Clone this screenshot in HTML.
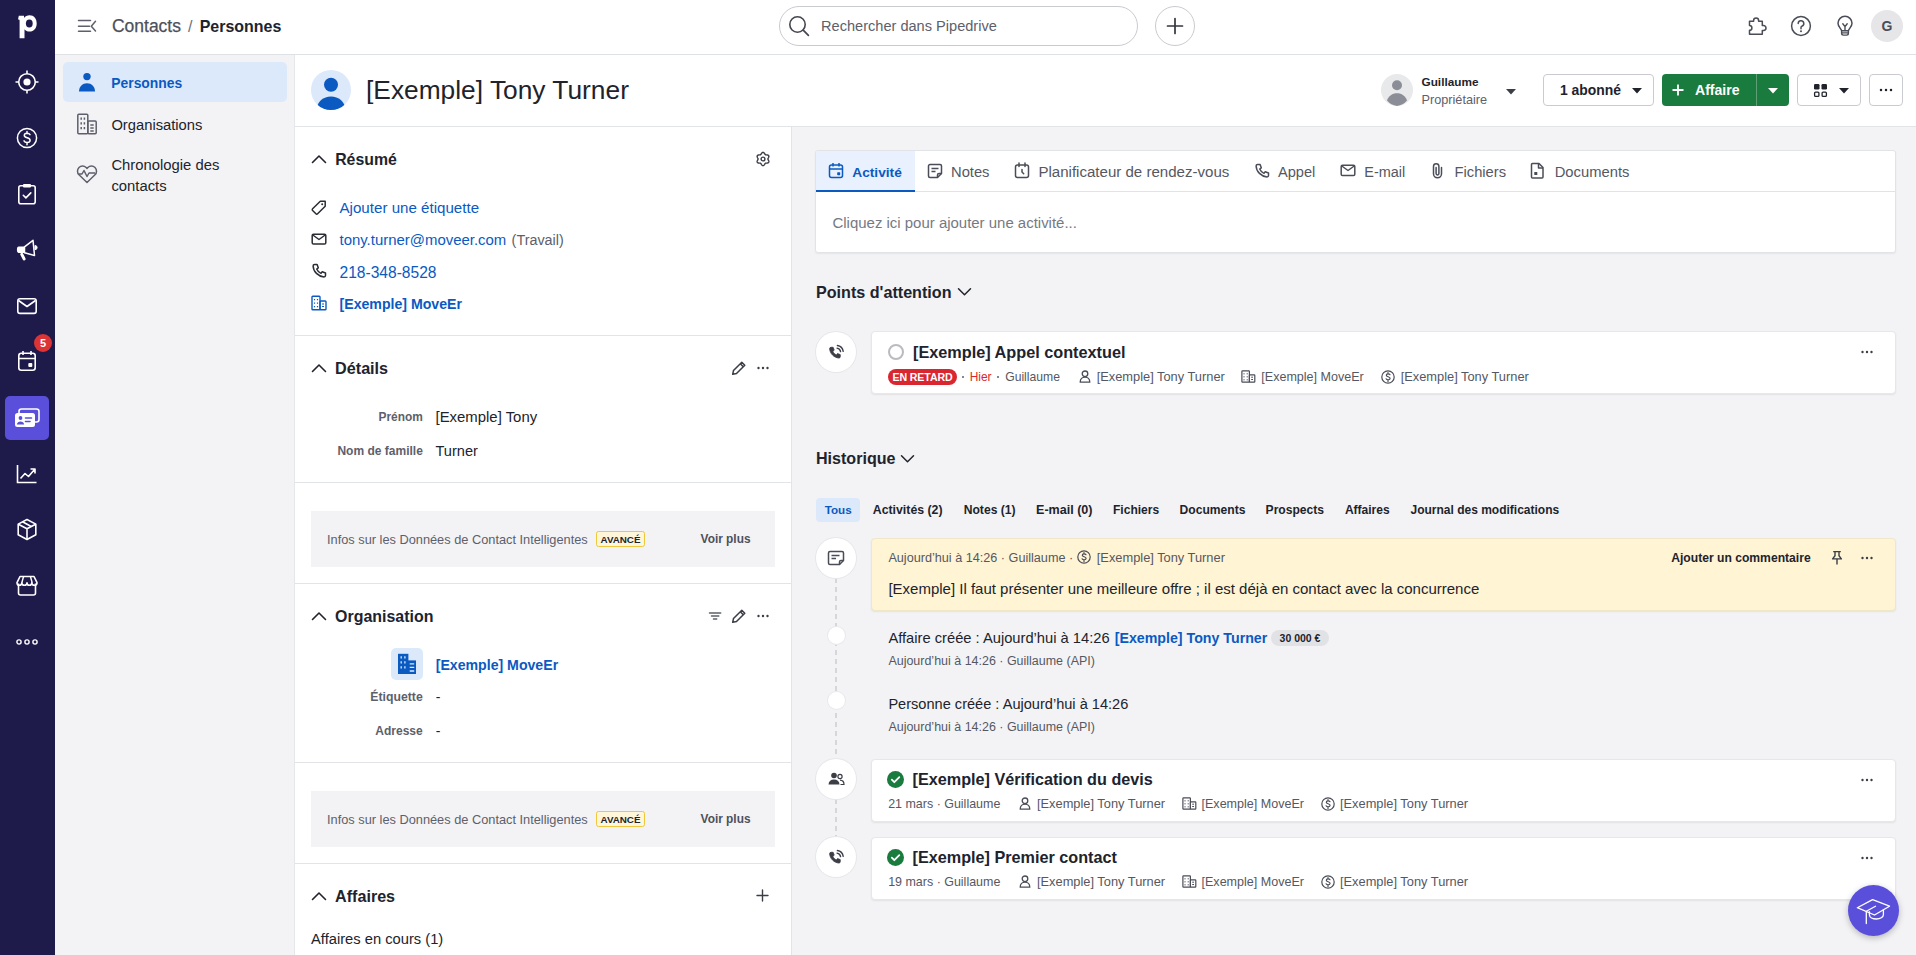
<!DOCTYPE html>
<html lang="fr"><head><meta charset="utf-8"><title>[Exemple] Tony Turner - Personnes</title><style>
*{margin:0;padding:0;box-sizing:border-box}
html,body{width:1916px;height:955px;overflow:hidden;background:#fff}
body{position:relative;font-family:"Liberation Sans",sans-serif;color:#21232c;-webkit-font-smoothing:antialiased}
.t{position:absolute;white-space:nowrap}
.r{position:absolute}
</style></head><body>
<div class="r" style="left:0px;top:0px;width:1916px;height:955px;background:#ffffff;"></div>
<div class="r" style="left:792px;top:127px;width:1124px;height:828px;background:#f3f3f5;"></div>
<div class="r" style="left:55px;top:55px;width:240px;height:900px;background:#f3f3f5;"></div>
<div class="r" style="left:294px;top:55px;width:1px;height:900px;background:#e6e7ea;"></div>
<div class="r" style="left:55px;top:54px;width:1861px;height:1px;background:#e0e1e4;"></div>
<div class="r" style="left:295px;top:126px;width:1621px;height:1px;background:#e3e4e7;"></div>
<div class="r" style="left:791px;top:127px;width:1px;height:828px;background:#e3e4e7;"></div>
<div class="r" style="left:0px;top:0px;width:55px;height:955px;background:#1e1b4b;"></div>
<svg class="r" style="left:17px;top:14px;" width="21" height="26" viewBox="0 0 21 26" fill="none"><path d="M1.8 1.8h5.2v2.2C8.2 2.4 10.2 1.3 12.6 1.3c4.3 0 7.1 3.4 7.1 8.1s-2.9 8.2-7.2 8.2c-2.1 0-3.9-.9-5-2.3v8.9H2.6V6.4c0-.6-.3-.9-.9-.9H1z" fill="#fff"/><ellipse cx="12.3" cy="9.5" rx="3.4" ry="4" fill="#1e1b4b"/></svg>
<svg class="r" style="left:15px;top:70px;" width="24" height="24" viewBox="0 0 24 24" fill="none"><circle cx="12" cy="12" r="8.3" stroke="#fff" stroke-width="1.6"/><circle cx="12" cy="12" r="3.6" fill="#fff"/><path d="M12 0.5v3M12 20.5v3M0.5 12h3M20.5 12h3" stroke="#fff" stroke-width="1.6"/></svg>
<svg class="r" style="left:16px;top:127px;" width="22" height="22" viewBox="0 0 22 22" fill="none"><circle cx="11" cy="11" r="9.6" stroke="#fff" stroke-width="1.5"/><path d="M14 7.6c-.5-.9-1.6-1.4-2.9-1.4-1.7 0-2.8.9-2.8 2.2 0 2.9 5.8 1.7 5.8 4.8 0 1.3-1.2 2.3-3 2.3-1.4 0-2.6-.6-3.1-1.6M11 4.5v2M11 15.7v2" stroke="#fff" stroke-width="1.5" stroke-linecap="round"/></svg>
<svg class="r" style="left:17px;top:183px;" width="20" height="22" viewBox="0 0 20 22" fill="none"><rect x="1.8" y="2.8" width="16.4" height="18" rx="2" stroke="#fff" stroke-width="1.6"/><rect x="6" y="1" width="8" height="3.5" rx="1" fill="#fff"/><path d="M6.3 12.3l2.6 2.6 4.9-5" stroke="#fff" stroke-width="1.6" stroke-linecap="round" stroke-linejoin="round"/></svg>
<svg class="r" style="left:12px;top:235px;" width="30" height="30" viewBox="0 0 30 30" fill="none"><path d="M6.8 11.6h5.7v6.3H6.8a1.9 3.15 0 0 1 0-6.3z" fill="#fff"/><path d="M12.5 11.8L21 5.3l1.5 15.2-10-2.8z" stroke="#fff" stroke-width="1.5" stroke-linejoin="round"/><path d="M23 10.5a2 2 0 0 1 0 4.2z" fill="#fff" stroke="#fff" stroke-width="1"/><path d="M9.8 19.3l2.3 4.6" stroke="#fff" stroke-width="3" stroke-linecap="round"/></svg>
<svg class="r" style="left:16px;top:296px;" width="22" height="20" viewBox="0 0 22 20" fill="none"><rect x="1.8" y="2.8" width="18.4" height="14.6" rx="2.2" stroke="#fff" stroke-width="1.6"/><path d="M2.5 4.5l8.5 6 8.5-6" stroke="#fff" stroke-width="1.6" stroke-linejoin="round"/></svg>
<svg class="r" style="left:17px;top:350px;" width="20" height="22" viewBox="0 0 20 22" fill="none"><rect x="1.8" y="3.3" width="16.4" height="17" rx="2.5" stroke="#fff" stroke-width="1.6"/><path d="M1.8 8.5h16.4M6 1v4M14 1v4" stroke="#fff" stroke-width="1.6"/><rect x="11.3" y="13" width="4" height="4" rx="1" fill="#fff"/></svg>
<div class="r" style="left:34px;top:334px;width:18px;height:18px;border-radius:50%;background:#dc3434;box-shadow:0 0 0 1.5px #1e1b4b;color:#fff;font-weight:700;font-size:11px;line-height:18px;text-align:center">5</div>
<div class="r" style="left:5px;top:396px;width:44px;height:44px;background:#5a4fdb;border-radius:5px;"></div>
<svg class="r" style="left:14px;top:408px;" width="26" height="20" viewBox="0 0 26 20" fill="none"><rect x="5" y="1" width="20" height="13" rx="2.5" stroke="#fff" stroke-width="1.6" fill="none"/><rect x="1" y="5" width="20" height="14" rx="2.5" fill="#fff"/><circle cx="6.5" cy="10" r="1.9" fill="#5a4fdb"/><path d="M2.8 16.5c.3-2 1.8-3.1 3.7-3.1s3.4 1.1 3.7 3.1z" fill="#5a4fdb"/><path d="M11.5 10h6M11.5 13.5h4.5" stroke="#5a4fdb" stroke-width="1.6" stroke-linecap="round"/></svg>
<svg class="r" style="left:16px;top:464px;" width="22" height="20" viewBox="0 0 22 20" fill="none"><path d="M1.5 1v17.5h19" stroke="#fff" stroke-width="1.6"/><path d="M4.5 14.5l4.5-5 3.5 3 6-7M14.5 5h4.5v4.5" stroke="#fff" stroke-width="1.6" stroke-linejoin="round"/></svg>
<svg class="r" style="left:16px;top:518px;" width="22" height="23" viewBox="0 0 22 23" fill="none"><path d="M11 1.5l8.8 4.6v10.6L11 21.5 2.2 16.7V6.1z" stroke="#fff" stroke-width="1.6" stroke-linejoin="round"/><path d="M2.4 6.2L11 10.8l8.6-4.6M11 10.8v10.5M6.5 3.8l8.7 4.7" stroke="#fff" stroke-width="1.6" stroke-linejoin="round"/></svg>
<svg class="r" style="left:16px;top:575px;" width="22" height="21" viewBox="0 0 22 21" fill="none"><path d="M2.5 8.5v9.5a2 2 0 0 0 2 2h13a2 2 0 0 0 2-2V8.5" stroke="#fff" stroke-width="1.6"/><path d="M4 1.5h14l3 6.2c0 1.6-1.3 2.6-2.6 2.6-1.4 0-2.6-1-2.6-2.6 0 1.6-1.3 2.6-2.6 2.6S11 9.3 11 7.7c0 1.6-1.3 2.6-2.6 2.6S5.8 9.3 5.8 7.7c0 1.6-1.3 2.6-2.6 2.6S.9 9.3 1 7.7z" stroke="#fff" stroke-width="1.6" stroke-linejoin="round"/><path d="M7.5 1.8l-1.7 6M14.5 1.8l1.7 6" stroke="#fff" stroke-width="1.4"/></svg>
<svg class="r" style="left:16px;top:637px;" width="22" height="10" viewBox="0 0 22 10" fill="none"><circle cx="3" cy="5" r="2.1" stroke="#fff" stroke-width="1.4"/><circle cx="11" cy="5" r="2.1" stroke="#fff" stroke-width="1.4"/><circle cx="19" cy="5" r="2.1" stroke="#fff" stroke-width="1.4"/></svg>
<svg class="r" style="left:77px;top:18px;" width="20" height="16" viewBox="0 0 20 16" fill="none"><path d="M1.5 2.5h12M1.5 8.2h11M1.5 13.2h12" stroke="#5d606b" stroke-width="1.5" stroke-linecap="round"/><path d="M18.5 3.3l-4.2 4.9 4.2 4.8" stroke="#5d606b" stroke-width="1.5" stroke-linecap="round" stroke-linejoin="round"/></svg>
<div class="t" style="top:18.00px;font-size:17.48px;line-height:17.48px;color:#4d505a;left:112px;-webkit-text-stroke:.25px #4d505a;">Contacts</div>
<div class="t" style="top:19.00px;font-size:16px;line-height:16px;color:#6d707a;left:188px;">/</div>
<div class="t" style="top:19.00px;font-size:15.96px;line-height:15.96px;font-weight:700;color:#21232c;left:199.7px;">Personnes</div>
<div class="r" style="left:779px;top:6px;width:359px;height:40px;background:#fff;border:1px solid #c9cbd0;border-radius:20px;box-sizing:border-box;"></div>
<svg class="r" style="left:787px;top:14px;" width="24" height="24" viewBox="0 0 24 24" fill="none"><circle cx="10.5" cy="10.5" r="7.7" stroke="#44474f" stroke-width="1.6"/><path d="M16.2 16.2l5.2 5.2" stroke="#44474f" stroke-width="1.7" stroke-linecap="round"/></svg>
<div class="t" style="top:19.00px;font-size:14.59px;line-height:14.59px;color:#5d606b;left:821px;">Rechercher dans Pipedrive</div>
<div class="r" style="left:1155px;top:6px;width:40px;height:40px;background:#fff;border:1px solid #c9cbd0;border-radius:50%;box-sizing:border-box;"></div>
<svg class="r" style="left:1166px;top:17px;" width="18" height="18" viewBox="0 0 18 18" fill="none"><path d="M9 1.5v15M1.5 9h15" stroke="#33363e" stroke-width="1.7" stroke-linecap="round"/></svg>
<svg class="r" style="left:1740px;top:10px;" width="30" height="30" viewBox="0 0 30 30" fill="none"><path d="M9.5 24.2V20.3a2.4 2.4 0 0 0 0-4.8V11.3h4.1v-.8a2.5 2.5 0 0 1 5 0v.8h3.7v4.3h1.3a2.4 2.4 0 0 1 0 4.8h-1.3v3.8z" stroke="#4a4d57" stroke-width="1.5" stroke-linejoin="round"/></svg>
<svg class="r" style="left:1790px;top:15px;" width="22" height="22" viewBox="0 0 22 22" fill="none"><circle cx="11" cy="11" r="9.4" stroke="#4a4d57" stroke-width="1.5"/><path d="M8.2 8.5a2.8 2.8 0 1 1 3.7 2.7c-.6.3-.9.8-.9 1.5v1" stroke="#4a4d57" stroke-width="1.5" stroke-linecap="round"/><circle cx="11" cy="16.3" r="1" fill="#4a4d57"/></svg>
<svg class="r" style="left:1834px;top:15px;" width="22" height="22" viewBox="0 0 22 22" fill="none"><path d="M7.6 15.7C7.3 13.8 4 12 4 8.3a7 7 0 0 1 14 0c0 3.7-3.3 5.5-3.6 7.4z" stroke="#4a4d57" stroke-width="1.5" stroke-linejoin="round"/><path d="M7.6 15.7v2.6c0 1 .8 1.8 1.8 1.8h3.2c1 0 1.8-.8 1.8-1.8v-2.6M7.8 17.9h6.4" stroke="#4a4d57" stroke-width="1.4" stroke-linejoin="round"/><path d="M8.8 8.8L11 11.6l2.2-2.8M11 11.6v4" stroke="#4a4d57" stroke-width="1.4" stroke-linecap="round" stroke-linejoin="round"/></svg>
<div class="r" style="left:1871px;top:10px;width:32px;height:32px;border-radius:50%;background:#e6e6e8;color:#4a4d57;font-weight:700;font-size:14px;line-height:32px;text-align:center">G</div>
<div class="r" style="left:63px;top:62px;width:224px;height:40px;background:#dce9fb;border-radius:5px;"></div>
<svg class="r" style="left:77px;top:72px;" width="20" height="20" viewBox="0 0 20 20" fill="none"><circle cx="10" cy="4.6" r="3.7" fill="#0a5ac2"/><path d="M2 19.5c0-5 3.6-8.2 8-8.2s8 3.2 8 8.2z" fill="#0a5ac2"/></svg>
<div class="t" style="top:77.00px;font-size:13.87px;line-height:13.87px;font-weight:700;color:#0a5ac2;left:111.3px;">Personnes</div>
<svg class="r" style="left:76px;top:113px;" width="22" height="22" viewBox="0 0 22 22" fill="none"><rect x="1.8" y="1.2" width="10" height="19.6" rx="1" stroke="#5d606b" stroke-width="1.5"/><rect x="11.8" y="8" width="8.4" height="12.8" rx="1" stroke="#5d606b" stroke-width="1.5"/><path d="M5.2 4.6v2.2M8.4 4.6v2.2M5.2 9.3v2.2M8.4 9.3v2.2M5.2 14v2.2M8.4 14v2.2M14.3 12h3.4M14.3 15h3.4M14.3 18h3.4" stroke="#5d606b" stroke-width="1.5"/></svg>
<div class="t" style="top:118.00px;font-size:14.75px;line-height:14.75px;color:#21232c;left:111.4px;">Organisations</div>
<svg class="r" style="left:76px;top:163px;" width="22" height="22" viewBox="0 0 22 22" fill="none"><path d="M11 19.5L3 11.8C1 9.8 1 6.5 3 4.5s5.1-2 7.1 0l.9.9.9-.9c2-2 5.1-2 7.1 0s2 5.3 0 7.3z" stroke="#5d606b" stroke-width="1.5" stroke-linejoin="round"/><path d="M2.5 11l3.5 0 2-3.5 3 6 2-3.5h6" stroke="#5d606b" stroke-width="1.5" stroke-linejoin="round"/></svg>
<div class="t" style="top:158.00px;font-size:14.83px;line-height:14.83px;color:#21232c;left:111.4px;">Chronologie des</div>
<div class="t" style="top:179.00px;font-size:14.83px;line-height:14.83px;color:#21232c;left:111.4px;">contacts</div>
<svg class="r" style="left:311px;top:70px;" width="40" height="40" viewBox="0 0 40 40" fill="none"><defs><clipPath id="av"><circle cx="20" cy="20" r="20"/></clipPath></defs><circle cx="20" cy="20" r="20" fill="#dce9fb"/><g clip-path="url(#av)"><circle cx="20" cy="14.8" r="7" fill="#0a5ac2"/><ellipse cx="20" cy="39" rx="14" ry="12.6" fill="#0a5ac2"/></g></svg>
<div class="t" style="top:77.00px;font-size:26.34px;line-height:26.34px;color:#21232c;left:366px;">[Exemple] Tony Turner</div>
<svg class="r" style="left:1381px;top:74px;" width="32" height="32" viewBox="0 0 32 32" fill="none"><circle cx="16" cy="16" r="16" fill="#e8e9eb"/><circle cx="16" cy="11.3" r="5" fill="#8b8e96"/><path d="M6 26.5c1.5-4.6 5.4-7.2 10-7.2s8.5 2.6 10 7.2A15.9 15.9 0 0 1 16 32a15.9 15.9 0 0 1-10-5.5z" fill="#8b8e96"/></svg>
<div class="t" style="top:76.00px;font-size:11.79px;line-height:11.79px;font-weight:700;color:#21232c;left:1421.5px;">Guillaume</div>
<div class="t" style="top:94.00px;font-size:12.69px;line-height:12.69px;color:#5d606b;left:1421.5px;">Propriétaire</div>
<svg class="r" style="left:1506px;top:89px;" width="10" height="6" viewBox="0 0 10 6" fill="none"><path d="M0 0h10L5 5.5z" fill="#3b3e47"/></svg>
<div class="r" style="left:1543px;top:74px;width:111px;height:32px;background:#fff;border:1px solid #c9cbd0;border-radius:4px;"></div>
<div class="t" style="top:84.00px;font-size:13.9px;line-height:13.9px;font-weight:700;color:#21232c;left:1560px;">1 abonné</div>
<svg class="r" style="left:1632px;top:88px;" width="10" height="6" viewBox="0 0 10 6" fill="none"><path d="M0 0h10L5 5.5z" fill="#21232c"/></svg>
<div class="r" style="left:1662px;top:74px;width:127px;height:32px;background:#1a7b3e;border-radius:4px;"></div>
<div class="r" style="left:1756px;top:74px;width:1px;height:32px;background:#5e9f76;"></div>
<svg class="r" style="left:1672px;top:84px;" width="12" height="12" viewBox="0 0 12 12" fill="none"><path d="M6 .5v11M.5 6h11" stroke="#fff" stroke-width="1.8"/></svg>
<div class="t" style="top:83.00px;font-size:14.08px;line-height:14.08px;font-weight:700;color:#fff;left:1695px;">Affaire</div>
<svg class="r" style="left:1768px;top:88px;" width="10" height="6" viewBox="0 0 10 6" fill="none"><path d="M0 0h10L5 5.5z" fill="#fff"/></svg>
<div class="r" style="left:1797px;top:74px;width:64px;height:32px;background:#fff;border:1px solid #c9cbd0;border-radius:4px;"></div>
<svg class="r" style="left:1813px;top:83px;" width="15" height="15" viewBox="0 0 15 15" fill="none"><rect x="1" y="1" width="5.5" height="5.5" rx="1.2" fill="#21232c"/><rect x="8.5" y="1" width="5.5" height="5.5" rx="1.2" fill="#21232c"/><rect x="1.6" y="9.1" width="4.3" height="4.3" rx="1" stroke="#21232c" stroke-width="1.3"/><rect x="9.1" y="9.1" width="4.3" height="4.3" rx="1" stroke="#21232c" stroke-width="1.3"/></svg>
<svg class="r" style="left:1839px;top:88px;" width="10" height="6" viewBox="0 0 10 6" fill="none"><path d="M0 0h10L5 5.5z" fill="#21232c"/></svg>
<div class="r" style="left:1869px;top:74px;width:34px;height:32px;background:#fff;border:1px solid #c9cbd0;border-radius:4px;"></div>
<svg class="r" style="left:1879px;top:88px;" width="14" height="4" viewBox="0 0 14 4" fill="none"><circle cx="2" cy="2" r="1.25" fill="#21232c"/><circle cx="7" cy="2" r="1.25" fill="#21232c"/><circle cx="12" cy="2" r="1.25" fill="#21232c"/></svg>
<svg class="r" style="left:311px;top:154px;" width="16" height="10" viewBox="0 0 16 10" fill="none"><path d="M1.5 8.5L8 2l6.5 6.5" stroke="#21232c" stroke-width="1.6" stroke-linecap="round" stroke-linejoin="round"/></svg>
<div class="t" style="top:152.00px;font-size:15.83px;line-height:15.83px;font-weight:700;color:#21232c;left:335.2px;">Résumé</div>
<svg class="r" style="left:754px;top:150px;" width="18" height="18" viewBox="0 0 18 18" fill="none"><path d="M13.90 9.00L13.95 9.32L14.10 9.67L14.32 10.06L14.55 10.49L14.75 10.95L14.87 11.43L14.86 11.89L14.72 12.30L14.43 12.63L14.04 12.87L13.57 13.01L13.07 13.07L12.58 13.08L12.13 13.08L11.76 13.13L11.45 13.24L11.20 13.45L10.97 13.76L10.74 14.14L10.49 14.55L10.19 14.96L9.83 15.30L9.43 15.52L9.00 15.60L8.57 15.52L8.17 15.30L7.81 14.96L7.51 14.55L7.26 14.14L7.03 13.76L6.80 13.45L6.55 13.24L6.24 13.13L5.87 13.08L5.42 13.08L4.93 13.07L4.43 13.01L3.96 12.87L3.57 12.63L3.28 12.30L3.14 11.89L3.13 11.43L3.25 10.95L3.45 10.49L3.68 10.06L3.90 9.67L4.05 9.32L4.10 9.00L4.05 8.68L3.90 8.33L3.68 7.94L3.45 7.51L3.25 7.05L3.13 6.57L3.14 6.11L3.28 5.70L3.57 5.37L3.96 5.13L4.43 4.99L4.93 4.93L5.42 4.92L5.87 4.92L6.24 4.87L6.55 4.76L6.80 4.55L7.03 4.24L7.26 3.86L7.51 3.45L7.81 3.04L8.17 2.70L8.57 2.48L9.00 2.40L9.43 2.48L9.83 2.70L10.19 3.04L10.49 3.45L10.74 3.86L10.97 4.24L11.20 4.55L11.45 4.76L11.76 4.87L12.13 4.92L12.58 4.92L13.07 4.93L13.57 4.99L14.04 5.13L14.43 5.37L14.72 5.70L14.86 6.11L14.87 6.57L14.75 7.05L14.55 7.51L14.32 7.94L14.10 8.33L13.95 8.68z" stroke="#3b3e47" stroke-width="1.4" stroke-linejoin="round"/><circle cx="9" cy="9" r="1.9" stroke="#3b3e47" stroke-width="1.4"/></svg>
<svg class="r" style="left:311px;top:200px;" width="16" height="15" viewBox="0 0 16 15" fill="none"><path d="M9.3 1.3h4.9v4.9l-7.6 7.6a1.2 1.2 0 0 1-1.7 0L1.6 10.5a1.2 1.2 0 0 1 0-1.7z" stroke="#2b2d35" stroke-width="1.5" stroke-linejoin="round"/><circle cx="11.2" cy="4.3" r="1" fill="#2b2d35"/></svg>
<div class="t" style="top:200.00px;font-size:15.14px;line-height:15.14px;color:#0a5ac2;left:339.5px;">Ajouter une étiquette</div>
<svg class="r" style="left:311px;top:233px;" width="16" height="12" viewBox="0 0 16 12" fill="none"><rect x="1.2" y="1.2" width="13.6" height="9.8" rx="1.3" stroke="#2b2d35" stroke-width="1.5"/><path d="M1.8 2l6.2 4.5L14.2 2" stroke="#2b2d35" stroke-width="1.5" stroke-linejoin="round"/></svg>
<div class="t" style="top:233.00px;font-size:14.95px;line-height:14.95px;color:#0a5ac2;left:339.5px;">tony.turner@moveer.com</div>
<div class="t" style="top:233.00px;font-size:14.38px;line-height:14.38px;color:#5d606b;left:511.6px;">(Travail)</div>
<svg class="r" style="left:311px;top:263px;" width="16" height="16" viewBox="0 0 16 16" fill="none"><path d="M3.6 1.5l2.5 0 1.2 3.3-1.6 1.2c.8 1.9 2.3 3.5 4.3 4.4l1.2-1.6 3.3 1.2v2.5c0 .8-.7 1.4-1.5 1.4C7.2 13.5 2.3 8.6 2.1 3c0-.8.7-1.5 1.5-1.5z" stroke="#2b2d35" stroke-width="1.5" stroke-linejoin="round"/></svg>
<div class="t" style="top:265.00px;font-size:15.58px;line-height:15.58px;color:#0a5ac2;left:339.5px;">218-348-8528</div>
<svg class="r" style="left:311px;top:295px;" width="16" height="16" viewBox="0 0 16 16" fill="none"><rect x="1" y="1.2" width="8" height="13.6" rx=".8" stroke="#0a5ac2" stroke-width="1.4"/><rect x="9" y="6" width="6" height="8.8" rx=".8" stroke="#0a5ac2" stroke-width="1.4"/><path d="M3.5 4v1.3M6.5 4v1.3M3.5 7.5v1.3M6.5 7.5v1.3M3.5 11v1.3M6.5 11v1.3M11 9h2M11 11.5h2" stroke="#0a5ac2" stroke-width="1.2"/></svg>
<div class="t" style="top:297.00px;font-size:14.13px;line-height:14.13px;font-weight:700;color:#0a5ac2;left:339.5px;">[Exemple] MoveEr</div>
<div class="r" style="left:295px;top:335px;width:496px;height:1px;background:#e3e4e7;"></div>
<svg class="r" style="left:311px;top:363px;" width="16" height="10" viewBox="0 0 16 10" fill="none"><path d="M1.5 8.5L8 2l6.5 6.5" stroke="#21232c" stroke-width="1.6" stroke-linecap="round" stroke-linejoin="round"/></svg>
<div class="t" style="top:360.00px;font-size:16.16px;line-height:16.16px;font-weight:700;color:#21232c;left:335.1px;">Détails</div>
<svg class="r" style="left:731px;top:360px;" width="16" height="16" viewBox="0 0 16 16" fill="none"><path d="M10.8 2.2l3 3L5.5 13.5l-3.8.8.8-3.8z" stroke="#3b3e47" stroke-width="1.5" stroke-linejoin="round"/><path d="M9.3 3.7l3 3" stroke="#3b3e47" stroke-width="1.5"/></svg>
<svg class="r" style="left:756px;top:366px;" width="14" height="4" viewBox="0 0 14 4" fill="none"><circle cx="2.5" cy="2" r="1.2" fill="#3b3e47"/><circle cx="7" cy="2" r="1.2" fill="#3b3e47"/><circle cx="11.5" cy="2" r="1.2" fill="#3b3e47"/></svg>
<div class="t" style="top:412.00px;font-size:11.92px;line-height:11.92px;font-weight:700;color:#5d606b;right:1493.2px;">Prénom</div>
<div class="t" style="top:410.00px;font-size:14.92px;line-height:14.92px;color:#21232c;left:435.5px;">[Exemple] Tony</div>
<div class="t" style="top:445.00px;font-size:12.01px;line-height:12.01px;font-weight:700;color:#5d606b;right:1493.2px;">Nom de famille</div>
<div class="t" style="top:444.00px;font-size:14.58px;line-height:14.58px;color:#21232c;left:435.5px;">Turner</div>
<div class="r" style="left:295px;top:482px;width:496px;height:1px;background:#e3e4e7;"></div>
<div class="r" style="left:311px;top:511px;width:464px;height:56px;background:#f3f3f5;"></div>
<div class="t" style="top:534.00px;font-size:12.79px;line-height:12.79px;color:#5d606b;left:327px;">Infos sur les Données de Contact Intelligentes</div>
<div class="r" style="left:596px;top:531px;width:49px;height:16px;background:#fff6da;border:1px solid #efc73a;border-radius:2.5px;color:#21232c;font-weight:700;font-size:9.8px;line-height:15px;text-align:center">AVANCÉ</div>
<div class="t" style="top:534.00px;font-size:11.89px;line-height:11.89px;font-weight:700;color:#4d505a;left:700.6px;">Voir plus</div>
<div class="r" style="left:295px;top:583px;width:496px;height:1px;background:#e3e4e7;"></div>
<svg class="r" style="left:311px;top:611px;" width="16" height="10" viewBox="0 0 16 10" fill="none"><path d="M1.5 8.5L8 2l6.5 6.5" stroke="#21232c" stroke-width="1.6" stroke-linecap="round" stroke-linejoin="round"/></svg>
<div class="t" style="top:609.00px;font-size:15.94px;line-height:15.94px;font-weight:700;color:#21232c;left:335.1px;">Organisation</div>
<svg class="r" style="left:707px;top:609px;" width="16" height="14" viewBox="0 0 16 14" fill="none"><path d="M2.5 3.9h11.2M4.5 6.9h7.3M6.5 10h3.2" stroke="#5d606b" stroke-width="1.5" stroke-linecap="round"/></svg>
<svg class="r" style="left:731px;top:608px;" width="16" height="16" viewBox="0 0 16 16" fill="none"><path d="M10.8 2.2l3 3L5.5 13.5l-3.8.8.8-3.8z" stroke="#3b3e47" stroke-width="1.5" stroke-linejoin="round"/><path d="M9.3 3.7l3 3" stroke="#3b3e47" stroke-width="1.5"/></svg>
<svg class="r" style="left:756px;top:614px;" width="14" height="4" viewBox="0 0 14 4" fill="none"><circle cx="2.5" cy="2" r="1.2" fill="#3b3e47"/><circle cx="7" cy="2" r="1.2" fill="#3b3e47"/><circle cx="11.5" cy="2" r="1.2" fill="#3b3e47"/></svg>
<div class="r" style="left:391px;top:648px;width:32px;height:32px;background:#dce9fb;border-radius:5px;"></div>
<svg class="r" style="left:391px;top:648px;" width="32" height="32" viewBox="0 0 32 32" fill="none"><rect x="7" y="5.8" width="10.4" height="20.2" fill="#0a5ac2"/><rect x="17" y="12.4" width="8" height="13.6" fill="#0a5ac2"/><path d="M10.2 8.2v2.4M13.9 8.2v2.4M10.2 13.2v2.4M13.9 13.2v2.4M10.2 18.2v2.4M13.9 18.2v2.4" stroke="#dce9fb" stroke-width="1.3"/><path d="M18.7 15.8h4.5M18.7 19.4h4.5M18.7 23h4.5" stroke="#dce9fb" stroke-width="1.3"/></svg>
<div class="t" style="top:658.00px;font-size:14.13px;line-height:14.13px;font-weight:700;color:#0a5ac2;left:435.7px;">[Exemple] MoveEr</div>
<div class="t" style="top:691.00px;font-size:12.25px;line-height:12.25px;font-weight:700;color:#5d606b;right:1493.3px;">Étiquette</div>
<div class="t" style="top:690.00px;font-size:14px;line-height:14px;color:#21232c;left:435.7px;">-</div>
<div class="t" style="top:725.00px;font-size:12.01px;line-height:12.01px;font-weight:700;color:#5d606b;right:1493.3px;">Adresse</div>
<div class="t" style="top:724.00px;font-size:14px;line-height:14px;color:#21232c;left:435.7px;">-</div>
<div class="r" style="left:295px;top:762px;width:496px;height:1px;background:#e3e4e7;"></div>
<div class="r" style="left:311px;top:791px;width:464px;height:56px;background:#f3f3f5;"></div>
<div class="t" style="top:814.00px;font-size:12.79px;line-height:12.79px;color:#5d606b;left:327px;">Infos sur les Données de Contact Intelligentes</div>
<div class="r" style="left:596px;top:811px;width:49px;height:16px;background:#fff6da;border:1px solid #efc73a;border-radius:2.5px;color:#21232c;font-weight:700;font-size:9.8px;line-height:15px;text-align:center">AVANCÉ</div>
<div class="t" style="top:814.00px;font-size:11.89px;line-height:11.89px;font-weight:700;color:#4d505a;left:700.6px;">Voir plus</div>
<div class="r" style="left:295px;top:863px;width:496px;height:1px;background:#e3e4e7;"></div>
<svg class="r" style="left:311px;top:891px;" width="16" height="10" viewBox="0 0 16 10" fill="none"><path d="M1.5 8.5L8 2l6.5 6.5" stroke="#21232c" stroke-width="1.6" stroke-linecap="round" stroke-linejoin="round"/></svg>
<div class="t" style="top:888.00px;font-size:16.11px;line-height:16.11px;font-weight:700;color:#21232c;left:335.1px;">Affaires</div>
<svg class="r" style="left:756px;top:889px;" width="13" height="13" viewBox="0 0 13 13" fill="none"><path d="M6.5 1v11M1 6.5h11" stroke="#3b3e47" stroke-width="1.4" stroke-linecap="round"/></svg>
<div class="t" style="top:932.00px;font-size:14.72px;line-height:14.72px;color:#21232c;left:311px;">Affaires en cours (1)</div>
<div class="r" style="left:815px;top:150px;width:1081px;height:103px;background:#fff;border:1px solid #e2e3e6;border-radius:3px;box-shadow:0 1px 2px rgba(0,0,0,.06);"></div>
<div class="r" style="left:816px;top:151px;width:99px;height:39px;background:#e8f1fd;border-top-left-radius:2px;"></div>
<div class="r" style="left:816px;top:191px;width:1079px;height:1px;background:#e2e3e6;"></div>
<div class="r" style="left:816px;top:190px;width:99px;height:2px;background:#0a5ac2;"></div>
<svg class="r" style="left:828px;top:162px;" width="16" height="17" viewBox="0 0 16 17" fill="none"><rect x="1.5" y="3" width="13" height="12.5" rx="2" stroke="#0a5ac2" stroke-width="1.5"/><path d="M1.5 7h13M5 1v3.5M11 1v3.5" stroke="#0a5ac2" stroke-width="1.5"/><rect x="9.2" y="10.2" width="3" height="3" rx=".6" fill="#0a5ac2"/></svg>
<div class="t" style="top:166.00px;font-size:13.7px;line-height:13.7px;font-weight:700;color:#0a5ac2;left:852.3px;">Activité</div>
<svg class="r" style="left:927px;top:163px;" width="16" height="16" viewBox="0 0 16 16" fill="none"><path d="M3 1.5h10a1.5 1.5 0 0 1 1.5 1.5v7.5l-4 4H3A1.5 1.5 0 0 1 1.5 13V3A1.5 1.5 0 0 1 3 1.5z" stroke="#4a4d57" stroke-width="1.5" stroke-linejoin="round"/><path d="M4.5 5.5h7M4.5 8.5h4M14.5 10.5h-2.5a1.5 1.5 0 0 0-1.5 1.5v2.5" stroke="#4a4d57" stroke-width="1.5" stroke-linejoin="round"/></svg>
<div class="t" style="top:165.00px;font-size:14.74px;line-height:14.74px;color:#555862;left:951px;">Notes</div>
<svg class="r" style="left:1014px;top:162px;" width="16" height="17" viewBox="0 0 16 17" fill="none"><rect x="1.5" y="3" width="13" height="12.5" rx="2" stroke="#4a4d57" stroke-width="1.5"/><path d="M5 1v3.5M11 1v3.5M8 7.5v2.5l1.7 1.7" stroke="#4a4d57" stroke-width="1.5" stroke-linecap="round"/></svg>
<div class="t" style="top:164.00px;font-size:15.07px;line-height:15.07px;color:#555862;left:1038.4px;">Planificateur de rendez-vous</div>
<svg class="r" style="left:1254px;top:163px;" width="16" height="16" viewBox="0 0 16 16" fill="none"><path d="M3.6 1.5l2.5 0 1.2 3.3-1.6 1.2c.8 1.9 2.3 3.5 4.3 4.4l1.2-1.6 3.3 1.2v2.5c0 .8-.7 1.4-1.5 1.4C7.2 13.5 2.3 8.6 2.1 3c0-.8.7-1.5 1.5-1.5z" stroke="#4a4d57" stroke-width="1.5" stroke-linejoin="round"/></svg>
<div class="t" style="top:165.00px;font-size:14.62px;line-height:14.62px;color:#555862;left:1278px;">Appel</div>
<svg class="r" style="left:1340px;top:164px;" width="16" height="13" viewBox="0 0 16 13" fill="none"><rect x="1.2" y="1.2" width="13.6" height="10.3" rx="1.3" stroke="#4a4d57" stroke-width="1.5"/><path d="M1.8 2l6.2 4.5L14.2 2" stroke="#4a4d57" stroke-width="1.5" stroke-linejoin="round"/></svg>
<div class="t" style="top:165.00px;font-size:14.47px;line-height:14.47px;color:#555862;left:1364.3px;">E-mail</div>
<svg class="r" style="left:1431px;top:162px;" width="13" height="17" viewBox="0 0 13 17" fill="none"><path d="M10.5 5.5v6.3a4 4 0 0 1-8 0V4.5a2.7 2.7 0 0 1 5.4 0v7a1.4 1.4 0 0 1-2.8 0V5.5" stroke="#4a4d57" stroke-width="1.5" stroke-linecap="round"/></svg>
<div class="t" style="top:165.00px;font-size:14.74px;line-height:14.74px;color:#555862;left:1454.5px;">Fichiers</div>
<svg class="r" style="left:1530px;top:162px;" width="15" height="17" viewBox="0 0 15 17" fill="none"><path d="M2.5 1.5h6.5l4 4v9.5a1 1 0 0 1-1 1h-9.5a1 1 0 0 1-1-1V2.5a1 1 0 0 1 1-1z" stroke="#4a4d57" stroke-width="1.5" stroke-linejoin="round"/><path d="M8.5 1.5v4.5h4.5" stroke="#4a4d57" stroke-width="1.5" stroke-linejoin="round"/><rect x="4.3" y="10" width="3" height="3" fill="#4a4d57"/></svg>
<div class="t" style="top:165.00px;font-size:14.77px;line-height:14.77px;color:#555862;left:1554.7px;">Documents</div>
<div class="t" style="top:216.00px;font-size:14.96px;line-height:14.96px;color:#767983;left:832.5px;">Cliquez ici pour ajouter une activité...</div>
<div class="t" style="top:284.00px;font-size:16.14px;line-height:16.14px;font-weight:700;color:#21232c;left:816px;">Points d'attention</div>
<svg class="r" style="left:957px;top:287px;" width="15" height="10" viewBox="0 0 15 10" fill="none"><path d="M1.5 1.8L7.5 7.8l6-6" stroke="#21232c" stroke-width="1.5" stroke-linecap="round" stroke-linejoin="round"/></svg>
<div class="r" style="left:816px;top:332px;width:40px;height:40px;border-radius:50%;background:#fff;box-shadow:0 0 0 1px #e6e7ea"></div>
<svg class="r" style="left:826px;top:342px;" width="20" height="20" viewBox="0 0 20 20" fill="none"><g transform="translate(-.6 1.6) scale(1.06)"><path d="M5.3 3.5l2 0 1 2.7-1.3 1c.6 1.5 1.8 2.8 3.4 3.5l1-1.3 2.6 1v2c0 .7-.5 1.2-1.2 1.2C8.2 13.4 4.2 9.4 4 4.7c0-.7.6-1.2 1.3-1.2z" fill="#3b3e47" stroke="#3b3e47" stroke-width=".8" stroke-linejoin="round"/><path d="M11 4.3a4 4 0 0 1 3.3 3.3M11.3 1.8a6.5 6.5 0 0 1 5.5 5.5" stroke="#3b3e47" stroke-width="1.3" stroke-linecap="round"/></g></svg>
<div class="r" style="left:871px;top:331px;width:1025px;height:63px;background:#fff;border:1px solid #e6e7ea;border-radius:4px;box-shadow:0 1px 2px rgba(0,0,0,.07);"></div>
<div class="r" style="left:888px;top:344px;width:16px;height:16px;border-radius:50%;border:2px solid #b9bbc1"></div>
<div class="t" style="top:344.00px;font-size:16.26px;line-height:16.26px;font-weight:700;color:#21232c;left:913px;">[Exemple] Appel contextuel</div>
<div class="r" style="left:888px;top:369px;width:69px;height:16px;border-radius:8px;background:#d9262f;color:#fff;font-weight:700;font-size:10.6px;line-height:16px;text-align:center;letter-spacing:-.1px">EN RETARD</div>
<div class="r" style="left:961.5px;top:375.5px;width:2.2px;height:2.2px;background:#5d606b;border-radius:50%;"></div>
<div class="t" style="top:372.00px;font-size:11.94px;line-height:11.94px;color:#d9262f;left:969.7px;">Hier</div>
<div class="r" style="left:997px;top:375.5px;width:2.2px;height:2.2px;background:#5d606b;border-radius:50%;"></div>
<div class="t" style="top:371.00px;font-size:12.17px;line-height:12.17px;color:#555862;left:1005.2px;">Guillaume</div>
<svg class="r" style="left:1079px;top:370px;" width="12" height="13" viewBox="0 0 12 13" fill="none"><circle cx="6" cy="3.8" r="2.8" stroke="#4a4d57" stroke-width="1.3"/><path d="M1.2 12.2c0-3 2.1-5 4.8-5s4.8 2 4.8 5z" stroke="#4a4d57" stroke-width="1.3" stroke-linejoin="round"/></svg>
<div class="t" style="top:371.00px;font-size:12.84px;line-height:12.84px;color:#555862;left:1096.7px;">[Exemple] Tony Turner</div>
<svg class="r" style="left:1241px;top:370px;" width="15" height="13" viewBox="0 0 15 13" fill="none"><rect x=".9" y=".8" width="7.5" height="11.4" rx=".6" stroke="#4a4d57" stroke-width="1.2"/><rect x="8.4" y="4.8" width="5.4" height="7.4" rx=".6" stroke="#4a4d57" stroke-width="1.2"/><path d="M3 3.2v1.2M6.2 3.2v1.2M3 6.2v1.2M6.2 6.2v1.2M3 9.2v1.2M6.2 9.2v1.2M10.2 7.2h1.8M10.2 9.5h1.8" stroke="#4a4d57" stroke-width="1"/></svg>
<div class="t" style="top:371.00px;font-size:12.56px;line-height:12.56px;color:#555862;left:1261.3px;">[Exemple] MoveEr</div>
<svg class="r" style="left:1381px;top:370px;" width="14" height="14" viewBox="0 0 14 14" fill="none"><circle cx="7" cy="7" r="6.2" stroke="#4a4d57" stroke-width="1.2"/><path d="M9 4.7c-.3-.6-1-.9-1.9-.9-1.1 0-1.8.6-1.8 1.4 0 1.9 3.8 1.1 3.8 3.1 0 .9-.8 1.5-2 1.5-.9 0-1.7-.4-2-1M7 2.6v1.2M7 10.2v1.2" stroke="#4a4d57" stroke-width="1.2" stroke-linecap="round"/></svg>
<div class="t" style="top:371.00px;font-size:12.84px;line-height:12.84px;color:#555862;left:1400.7px;">[Exemple] Tony Turner</div>
<svg class="r" style="left:1860px;top:350px;" width="14" height="4" viewBox="0 0 14 4" fill="none"><circle cx="2.5" cy="2" r="1.2" fill="#3b3e47"/><circle cx="7" cy="2" r="1.2" fill="#3b3e47"/><circle cx="11.5" cy="2" r="1.2" fill="#3b3e47"/></svg>
<div class="t" style="top:450.00px;font-size:16.08px;line-height:16.08px;font-weight:700;color:#21232c;left:816px;">Historique</div>
<svg class="r" style="left:900px;top:454px;" width="15" height="10" viewBox="0 0 15 10" fill="none"><path d="M1.5 1.8L7.5 7.8l6-6" stroke="#21232c" stroke-width="1.5" stroke-linecap="round" stroke-linejoin="round"/></svg>
<div class="r" style="left:816px;top:498px;width:44px;height:24px;background:#dce9fb;border-radius:4px;"></div>
<div class="t" style="top:504.00px;font-size:11.67px;line-height:11.67px;font-weight:700;color:#0a5ac2;left:824.7px;">Tous</div>
<div class="t" style="top:504.00px;font-size:12.31px;line-height:12.31px;font-weight:700;color:#21232c;left:872.8px;">Activités (2)</div>
<div class="t" style="top:504.00px;font-size:12.13px;line-height:12.13px;font-weight:700;color:#21232c;left:963.7px;">Notes (1)</div>
<div class="t" style="top:504.00px;font-size:12.57px;line-height:12.57px;font-weight:700;color:#21232c;left:1036px;">E-mail (0)</div>
<div class="t" style="top:504.00px;font-size:12.05px;line-height:12.05px;font-weight:700;color:#21232c;left:1113px;">Fichiers</div>
<div class="t" style="top:504.00px;font-size:12.1px;line-height:12.1px;font-weight:700;color:#21232c;left:1179.6px;">Documents</div>
<div class="t" style="top:504.00px;font-size:12.1px;line-height:12.1px;font-weight:700;color:#21232c;left:1265.6px;">Prospects</div>
<div class="t" style="top:504.00px;font-size:12.03px;line-height:12.03px;font-weight:700;color:#21232c;left:1344.9px;">Affaires</div>
<div class="t" style="top:504.00px;font-size:12.0px;line-height:12.0px;font-weight:700;color:#21232c;left:1410.5px;">Journal des modifications</div>
<div class="r" style="left:835px;top:578px;width:2px;height:180px;background:repeating-linear-gradient(to bottom,#d5d6da 0 5px,transparent 5px 9px)"></div>
<div class="r" style="left:835px;top:799px;width:2px;height:38px;background:repeating-linear-gradient(to bottom,#d5d6da 0 5px,transparent 5px 9px)"></div>
<div class="r" style="left:816px;top:538px;width:40px;height:40px;border-radius:50%;background:#fff;box-shadow:0 0 0 1px #e6e7ea"></div>
<svg class="r" style="left:826px;top:548px;" width="20" height="20" viewBox="0 0 20 20" fill="none"><path d="M4 3.5h12a1.5 1.5 0 0 1 1.5 1.5v7.5l-4 4H4A1.5 1.5 0 0 1 2.5 15V5A1.5 1.5 0 0 1 4 3.5z" stroke="#4a4d57" stroke-width="1.5" stroke-linejoin="round"/><path d="M5.5 7.5h8M5.5 10.5h4.5M17.5 12.5H15a1.5 1.5 0 0 0-1.5 1.5v2.5" stroke="#4a4d57" stroke-width="1.5" stroke-linejoin="round"/></svg>
<div class="r" style="left:871px;top:538px;width:1025px;height:73px;background:#fff4d3;border:1px solid #f0e7c8;border-radius:4px;box-shadow:0 1px 2px rgba(0,0,0,.07);"></div>
<div class="t" style="top:552.00px;font-size:12.65px;line-height:12.65px;color:#555862;left:888.4px;">Aujourd’hui à 14:26 · Guillaume ·</div>
<svg class="r" style="left:1077px;top:550px;" width="14" height="14" viewBox="0 0 14 14" fill="none"><circle cx="7" cy="7" r="6.2" stroke="#4a4d57" stroke-width="1.2"/><path d="M9 4.7c-.3-.6-1-.9-1.9-.9-1.1 0-1.8.6-1.8 1.4 0 1.9 3.8 1.1 3.8 3.1 0 .9-.8 1.5-2 1.5-.9 0-1.7-.4-2-1M7 2.6v1.2M7 10.2v1.2" stroke="#4a4d57" stroke-width="1.2" stroke-linecap="round"/></svg>
<div class="t" style="top:552.00px;font-size:12.84px;line-height:12.84px;color:#555862;left:1096.8px;">[Exemple] Tony Turner</div>
<div class="t" style="top:552.00px;font-size:12.14px;line-height:12.14px;font-weight:700;color:#21232c;left:1671.2px;">Ajouter un commentaire</div>
<svg class="r" style="left:1830px;top:549px;" width="14" height="17" viewBox="0 0 14 17" fill="none"><path d="M3.2 2.6h7.6M5 2.6v4.2L2.6 9.9h8.8L9 6.8V2.6M7 9.9v5.6" stroke="#3b3e47" stroke-width="1.4" stroke-linejoin="round"/></svg>
<svg class="r" style="left:1860px;top:556px;" width="14" height="4" viewBox="0 0 14 4" fill="none"><circle cx="2.5" cy="2" r="1.2" fill="#3b3e47"/><circle cx="7" cy="2" r="1.2" fill="#3b3e47"/><circle cx="11.5" cy="2" r="1.2" fill="#3b3e47"/></svg>
<div class="t" style="top:581.00px;font-size:15.01px;line-height:15.01px;color:#21232c;left:888.4px;">[Exemple] Il faut présenter une meilleure offre ; il est déjà en contact avec la concurrence</div>
<div class="r" style="left:828px;top:627px;width:17px;height:17px;border-radius:50%;background:#fff;box-shadow:0 0 0 1px #e8e9ec"></div>
<div class="r" style="left:828px;top:692px;width:17px;height:17px;border-radius:50%;background:#fff;box-shadow:0 0 0 1px #e8e9ec"></div>
<div class="t" style="top:631.00px;font-size:14.71px;line-height:14.71px;color:#21232c;left:888.4px;">Affaire créée : Aujourd’hui à 14:26</div>
<div class="t" style="top:631.00px;font-size:14.21px;line-height:14.21px;font-weight:700;color:#0a5ac2;left:1114.7px;">[Exemple] Tony Turner</div>
<div class="r" style="left:1271px;top:630px;width:58px;height:16px;border-radius:8px;background:#e1e2e5;color:#21232c;font-weight:700;font-size:10.5px;line-height:16px;text-align:center">30 000 €</div>
<div class="t" style="top:655.00px;font-size:12.48px;line-height:12.48px;color:#555862;left:888.4px;">Aujourd’hui à 14:26 · Guillaume (API)</div>
<div class="t" style="top:697.00px;font-size:14.58px;line-height:14.58px;color:#21232c;left:888.4px;">Personne créée : Aujourd’hui à 14:26</div>
<div class="t" style="top:721.00px;font-size:12.48px;line-height:12.48px;color:#555862;left:888.4px;">Aujourd’hui à 14:26 · Guillaume (API)</div>
<div class="r" style="left:816px;top:759px;width:40px;height:40px;border-radius:50%;background:#fff;box-shadow:0 0 0 1px #e6e7ea"></div>
<svg class="r" style="left:826px;top:769px;" width="20" height="20" viewBox="0 0 20 20" fill="none"><circle cx="8" cy="6.5" r="2.8" fill="#3b3e47"/><path d="M2.5 15.5c.2-3.2 2.4-5 5.5-5s5.3 1.8 5.5 5z" fill="#3b3e47"/><circle cx="14" cy="7.5" r="2.1" stroke="#3b3e47" stroke-width="1.2"/><path d="M14.5 15.5h3.5c0-2.5-1.5-4.2-4-4.3" stroke="#3b3e47" stroke-width="1.2"/></svg>
<div class="r" style="left:871px;top:759px;width:1025px;height:63px;background:#fff;border:1px solid #e6e7ea;border-radius:4px;box-shadow:0 1px 2px rgba(0,0,0,.07);"></div>
<svg class="r" style="left:887px;top:771px;" width="17" height="17" viewBox="0 0 17 17" fill="none"><circle cx="8.5" cy="8.5" r="8.5" fill="#1a7b3e"/><path d="M4.8 8.7l2.5 2.5 5-5" stroke="#fff" stroke-width="1.8" stroke-linecap="round" stroke-linejoin="round"/></svg>
<div class="t" style="top:771.00px;font-size:16.2px;line-height:16.2px;font-weight:700;color:#21232c;left:912.6px;">[Exemple] Vérification du devis</div>
<div class="t" style="top:798.00px;font-size:12.46px;line-height:12.46px;color:#555862;left:888.2px;">21 mars · Guillaume</div>
<svg class="r" style="left:1019px;top:796.8px;" width="12" height="13" viewBox="0 0 12 13" fill="none"><circle cx="6" cy="3.8" r="2.8" stroke="#4a4d57" stroke-width="1.3"/><path d="M1.2 12.2c0-3 2.1-5 4.8-5s4.8 2 4.8 5z" stroke="#4a4d57" stroke-width="1.3" stroke-linejoin="round"/></svg>
<div class="t" style="top:798.00px;font-size:12.84px;line-height:12.84px;color:#555862;left:1037px;">[Exemple] Tony Turner</div>
<svg class="r" style="left:1181.5px;top:796.8px;" width="15" height="13" viewBox="0 0 15 13" fill="none"><rect x=".9" y=".8" width="7.5" height="11.4" rx=".6" stroke="#4a4d57" stroke-width="1.2"/><rect x="8.4" y="4.8" width="5.4" height="7.4" rx=".6" stroke="#4a4d57" stroke-width="1.2"/><path d="M3 3.2v1.2M6.2 3.2v1.2M3 6.2v1.2M6.2 6.2v1.2M3 9.2v1.2M6.2 9.2v1.2M10.2 7.2h1.8M10.2 9.5h1.8" stroke="#4a4d57" stroke-width="1"/></svg>
<div class="t" style="top:798.00px;font-size:12.56px;line-height:12.56px;color:#555862;left:1201.5px;">[Exemple] MoveEr</div>
<svg class="r" style="left:1321px;top:796.8px;" width="14" height="14" viewBox="0 0 14 14" fill="none"><circle cx="7" cy="7" r="6.2" stroke="#4a4d57" stroke-width="1.2"/><path d="M9 4.7c-.3-.6-1-.9-1.9-.9-1.1 0-1.8.6-1.8 1.4 0 1.9 3.8 1.1 3.8 3.1 0 .9-.8 1.5-2 1.5-.9 0-1.7-.4-2-1M7 2.6v1.2M7 10.2v1.2" stroke="#4a4d57" stroke-width="1.2" stroke-linecap="round"/></svg>
<div class="t" style="top:798.00px;font-size:12.84px;line-height:12.84px;color:#555862;left:1340px;">[Exemple] Tony Turner</div>
<svg class="r" style="left:1860px;top:778px;" width="14" height="4" viewBox="0 0 14 4" fill="none"><circle cx="2.5" cy="2" r="1.2" fill="#3b3e47"/><circle cx="7" cy="2" r="1.2" fill="#3b3e47"/><circle cx="11.5" cy="2" r="1.2" fill="#3b3e47"/></svg>
<div class="r" style="left:816px;top:837px;width:40px;height:40px;border-radius:50%;background:#fff;box-shadow:0 0 0 1px #e6e7ea"></div>
<svg class="r" style="left:826px;top:847px;" width="20" height="20" viewBox="0 0 20 20" fill="none"><g transform="translate(-.6 1.6) scale(1.06)"><path d="M5.3 3.5l2 0 1 2.7-1.3 1c.6 1.5 1.8 2.8 3.4 3.5l1-1.3 2.6 1v2c0 .7-.5 1.2-1.2 1.2C8.2 13.4 4.2 9.4 4 4.7c0-.7.6-1.2 1.3-1.2z" fill="#3b3e47" stroke="#3b3e47" stroke-width=".8" stroke-linejoin="round"/><path d="M11 4.3a4 4 0 0 1 3.3 3.3M11.3 1.8a6.5 6.5 0 0 1 5.5 5.5" stroke="#3b3e47" stroke-width="1.3" stroke-linecap="round"/></g></svg>
<div class="r" style="left:871px;top:837px;width:1025px;height:63px;background:#fff;border:1px solid #e6e7ea;border-radius:4px;box-shadow:0 1px 2px rgba(0,0,0,.07);"></div>
<svg class="r" style="left:887px;top:849px;" width="17" height="17" viewBox="0 0 17 17" fill="none"><circle cx="8.5" cy="8.5" r="8.5" fill="#1a7b3e"/><path d="M4.8 8.7l2.5 2.5 5-5" stroke="#fff" stroke-width="1.8" stroke-linecap="round" stroke-linejoin="round"/></svg>
<div class="t" style="top:849.00px;font-size:16.2px;line-height:16.2px;font-weight:700;color:#21232c;left:912.6px;">[Exemple] Premier contact</div>
<div class="t" style="top:876.00px;font-size:12.46px;line-height:12.46px;color:#555862;left:888.2px;">19 mars · Guillaume</div>
<svg class="r" style="left:1019px;top:874.8px;" width="12" height="13" viewBox="0 0 12 13" fill="none"><circle cx="6" cy="3.8" r="2.8" stroke="#4a4d57" stroke-width="1.3"/><path d="M1.2 12.2c0-3 2.1-5 4.8-5s4.8 2 4.8 5z" stroke="#4a4d57" stroke-width="1.3" stroke-linejoin="round"/></svg>
<div class="t" style="top:876.00px;font-size:12.84px;line-height:12.84px;color:#555862;left:1037px;">[Exemple] Tony Turner</div>
<svg class="r" style="left:1181.5px;top:874.8px;" width="15" height="13" viewBox="0 0 15 13" fill="none"><rect x=".9" y=".8" width="7.5" height="11.4" rx=".6" stroke="#4a4d57" stroke-width="1.2"/><rect x="8.4" y="4.8" width="5.4" height="7.4" rx=".6" stroke="#4a4d57" stroke-width="1.2"/><path d="M3 3.2v1.2M6.2 3.2v1.2M3 6.2v1.2M6.2 6.2v1.2M3 9.2v1.2M6.2 9.2v1.2M10.2 7.2h1.8M10.2 9.5h1.8" stroke="#4a4d57" stroke-width="1"/></svg>
<div class="t" style="top:876.00px;font-size:12.56px;line-height:12.56px;color:#555862;left:1201.5px;">[Exemple] MoveEr</div>
<svg class="r" style="left:1321px;top:874.8px;" width="14" height="14" viewBox="0 0 14 14" fill="none"><circle cx="7" cy="7" r="6.2" stroke="#4a4d57" stroke-width="1.2"/><path d="M9 4.7c-.3-.6-1-.9-1.9-.9-1.1 0-1.8.6-1.8 1.4 0 1.9 3.8 1.1 3.8 3.1 0 .9-.8 1.5-2 1.5-.9 0-1.7-.4-2-1M7 2.6v1.2M7 10.2v1.2" stroke="#4a4d57" stroke-width="1.2" stroke-linecap="round"/></svg>
<div class="t" style="top:876.00px;font-size:12.84px;line-height:12.84px;color:#555862;left:1340px;">[Exemple] Tony Turner</div>
<svg class="r" style="left:1860px;top:856px;" width="14" height="4" viewBox="0 0 14 4" fill="none"><circle cx="2.5" cy="2" r="1.2" fill="#3b3e47"/><circle cx="7" cy="2" r="1.2" fill="#3b3e47"/><circle cx="11.5" cy="2" r="1.2" fill="#3b3e47"/></svg>
<div class="r" style="left:1848px;top:885px;width:51px;height:51px;border-radius:50%;background:#5a4fdb;box-shadow:0 2px 6px rgba(0,0,0,.25)"></div>
<svg class="r" style="left:1848px;top:885px;" width="51" height="51" viewBox="0 0 51 51" fill="none"><path d="M24.6 14.6L41.5 21.2 26.5 30 9.3 22.7z" stroke="#fff" stroke-width="1.3" stroke-linejoin="round"/><path d="M21.4 26.2v3.6c0 2.6 3.2 4.2 7 4.2s7-1.8 7-4.3v-5.2" stroke="#fff" stroke-width="1.3"/><path d="M27.5 21.3L18.3 26.3v12.3" stroke="#fff" stroke-width="1.3" stroke-linecap="round" stroke-linejoin="round"/></svg>
</body></html>
